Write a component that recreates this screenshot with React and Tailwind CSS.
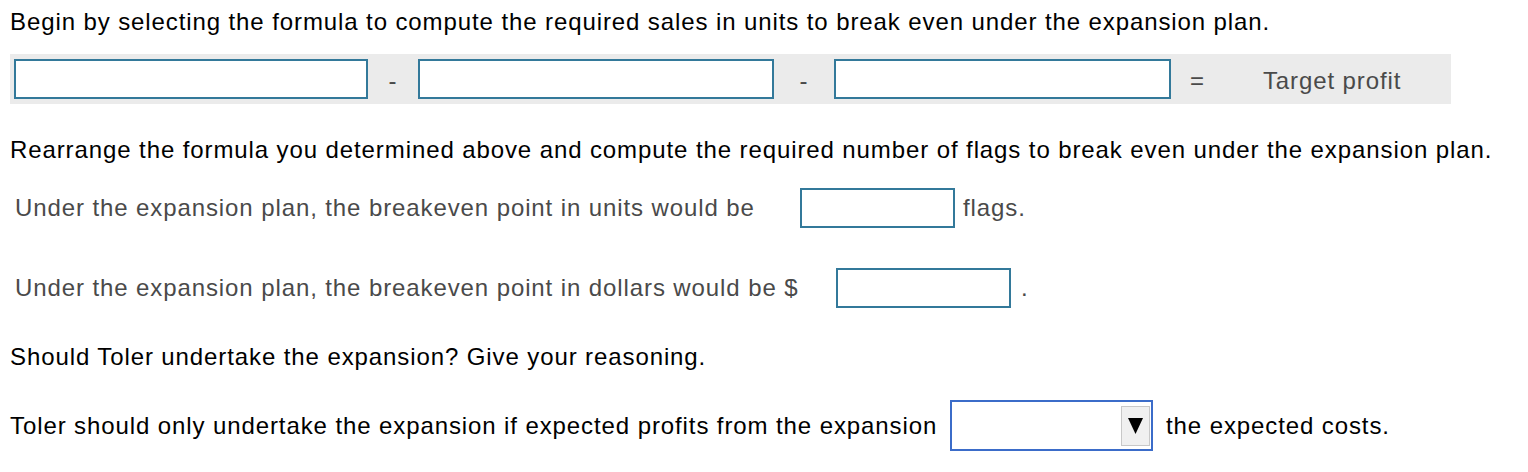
import React from "react";

// Expansion plan break-even question
function Box({ className = "" }) {
  return <div className={`h-[40px] shrink-0 border-2 border-[#33799a] bg-white ${className}`} />;
}

export default function App() {
  return (
    <div className="w-[1528px] h-[472px] bg-white font-['Liberation_Sans',Arial,sans-serif] text-[24px] leading-[26px] tracking-[0.9px] text-black whitespace-nowrap">
      <p className="pl-[10px] pt-[9px]">
        Begin by selecting the formula to compute the required sales in units to break even under the expansion plan.
      </p>

      {/* Formula band */}
      <div className="ml-[10px] mt-[19px] w-[1441px] h-[50px] bg-[#ebebeb] flex items-center pl-[4px] text-[#4a4a4a]">
        <Box className="w-[354px]" />
        <span className="w-[50px] text-center pt-[4px]">-</span>
        <Box className="w-[356px]" />
        <span className="w-[60px] text-center pt-[4px]">-</span>
        <Box className="w-[337px]" />
        <span className="ml-[19px] pt-[3px]">=</span>
        <span className="ml-[58px] pt-[3px]">Target profit</span>
      </div>

      <p className="pl-[10px] mt-[33px]">
        Rearrange the formula you determined above and compute the required number of flags to break even under the expansion plan.
      </p>

      <div className="flex items-center h-[40px] pl-[15px] mt-[25px] text-[#4a4a4a]">
        <span className="w-[785px]">Under the expansion plan, the breakeven point in units would be</span>
        <Box className="w-[155px]" />
        <span className="ml-[8px]">flags.</span>
      </div>

      <div className="flex items-center h-[40px] pl-[15px] mt-[40px] text-[#4a4a4a]">
        <span className="w-[821px]">Under the expansion plan, the breakeven point in dollars would be $</span>
        <Box className="w-[175px]" />
        <span className="ml-[10px]">.</span>
      </div>

      <p className="pl-[10px] mt-[36px]">Should Toler undertake the expansion? Give your reasoning.</p>

      <div className="flex items-center h-[51px] pl-[10px] mt-[30px]">
        <span className="w-[940px]">Toler should only undertake the expansion if expected profits from the expansion</span>
        <div className="w-[203px] h-[51px] shrink-0 border-2 border-[#3b6cc9] bg-white flex items-center justify-end pr-[1px]">
          <div className="w-[29px] h-[40px] bg-[#f0f0f0] border border-[#c8c8c8] flex items-center justify-center">
            <svg width="15" height="18" viewBox="0 0 15 18">
              <path d="M0 1 H15 L7.5 17 Z" fill="#000" />
            </svg>
          </div>
        </div>
        <span className="ml-[13px]">the expected costs.</span>
      </div>
    </div>
  );
}
